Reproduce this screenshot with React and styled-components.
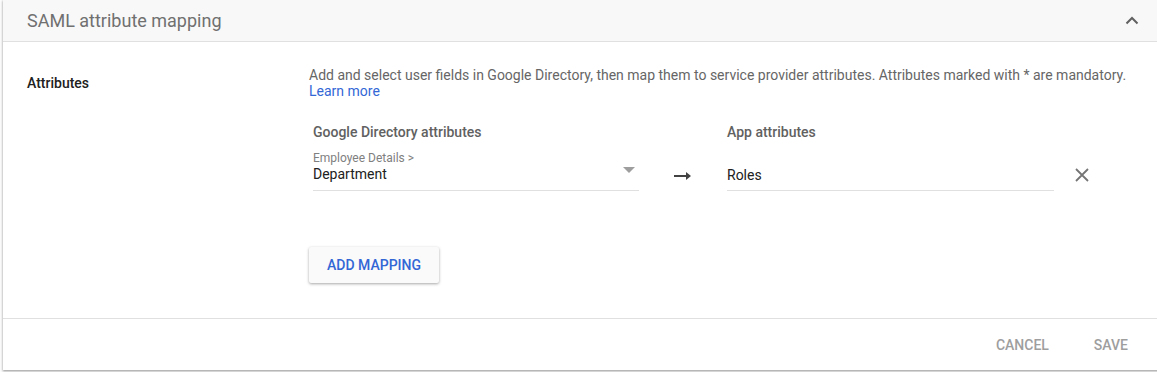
import styled, { createGlobalStyle } from "styled-components";

const GlobalStyle = createGlobalStyle`
  html, body {
    margin: 0;
    padding: 0;
    background: #fff;
    overflow: hidden;
  }
  body {
    font-family: Roboto, "Liberation Sans", Arial, sans-serif;
  }
`;

const Card = styled.section`
  margin: 0 -6px 2px 3px;
  background: #fff;
  box-shadow: 0 1px 2px rgba(0, 0, 0, 0.3), 0 1px 3px 1px rgba(0, 0, 0, 0.12);
  height: 370px;
  display: flex;
  flex-direction: column;
`;

const Header = styled.header`
  height: 41px;
  flex: none;
  display: flex;
  align-items: center;
  justify-content: space-between;
  padding: 0 16px 0 24px;
  background: #f8f8f8;
  border-bottom: 1px solid #e0e0e0;
`;

const Title = styled.h2`
  margin: 0;
  font-size: 18px;
  font-weight: 400;
  color: #707070;
`;

const IconButton = styled.button`
  border: 0;
  background: none;
  padding: 0;
  width: 24px;
  height: 24px;
  display: flex;
  align-items: center;
  justify-content: center;
  margin-right: ${({ $offset }) => $offset || 0}px;
  cursor: pointer;
`;

const Body = styled.div`
  flex: 1;
  display: grid;
  grid-template-columns: 282px 1fr;
  padding: 25px 24px 0 24px;
  border-bottom: 1px solid #e0e0e0;
`;

const SectionLabel = styled.div`
  font-size: 14px;
  font-weight: 500;
  color: #212121;
  padding-top: 8px;
  line-height: 16px;
`;

const Description = styled.p`
  margin: 0;
  font-size: 14px;
  line-height: 16px;
  color: #666;
`;

const Link = styled.a`
  color: #3367d6;
  text-decoration: none;
`;

const Mapping = styled.div`
  margin-top: 25px;
  padding-left: 4px;
  display: grid;
  grid-template-columns: 326px 88px 327px 56px;
  align-items: end;
`;

const ColumnHead = styled.div`
  font-size: 14px;
  font-weight: 500;
  line-height: 16px;
  color: #616161;
  margin-bottom: 10px;
`;

const Field = styled.div`
  position: relative;
  border-bottom: 1px solid #e0e0e0;
  padding-top: ${({ $top }) => $top || 0}px;
  padding-bottom: ${({ $pad }) => $pad}px;
`;

const SmallLabel = styled.div`
  font-size: 12px;
  line-height: 14px;
  color: #808080;
`;

const Value = styled.div`
  font-size: 14px;
  line-height: 19px;
  color: #212121;
`;

const Caret = styled.span`
  position: absolute;
  right: 4px;
  top: 17px;
  width: 0;
  height: 0;
  border-left: 6px solid transparent;
  border-right: 6px solid transparent;
  border-top: 6px solid #9e9e9e;
`;

const ArrowCell = styled.div`
  display: flex;
  justify-content: center;
  padding-bottom: 11px;
`;

const ClearCell = styled.div`
  display: flex;
  justify-content: center;
  padding-bottom: 9px;
`;

const RaisedButton = styled.button`
  margin-top: 56px;
  align-self: flex-start;
  height: 36px;
  padding: 0 18px;
  border: 0;
  border-radius: 2px;
  background: #fafafa;
  color: #3367d6;
  font-family: inherit;
  font-size: 14px;
  font-weight: 500;
  box-shadow: 0 1px 3px rgba(0, 0, 0, 0.35);
  cursor: pointer;
`;

const Footer = styled.footer`
  height: 51px;
  flex: none;
  display: flex;
  align-items: center;
  justify-content: flex-end;
  gap: 13px;
  padding-right: 19px;
`;

const FlatButton = styled.button`
  height: 36px;
  padding: 0 16px;
  border: 0;
  background: none;
  color: #9e9e9e;
  font-family: inherit;
  font-size: 14px;
  font-weight: 500;
  cursor: default;
`;

const Content = styled.div`
  display: flex;
  flex-direction: column;
`;

export default function App() {
  return (
    <>
      <GlobalStyle />
      <Card>
        <Header>
          <Title>SAML attribute mapping</Title>
          <IconButton $offset={3} aria-label="Collapse">
            <svg width="14" height="9" viewBox="0 0 14 9">
              <path d="M1.5 7.5 L7 2 L12.5 7.5" fill="none" stroke="#616161" strokeWidth="2" />
            </svg>
          </IconButton>
        </Header>
        <Body>
          <SectionLabel>Attributes</SectionLabel>
          <Content>
            <Description>
              Add and select user fields in Google Directory, then map them to service provider
              attributes. Attributes marked with * are mandatory.
              <br />
              <Link href="#">Learn more</Link>
            </Description>
            <Mapping>
              <ColumnHead>Google Directory attributes</ColumnHead>
              <span />
              <ColumnHead>App attributes</ColumnHead>
              <span />
              <Field $top={1} $pad={6}>
                <SmallLabel>Employee Details &gt;</SmallLabel>
                <Value>Department</Value>
                <Caret />
              </Field>
              <ArrowCell>
                <svg width="18" height="8" viewBox="0 0 18 8">
                  <path d="M0 4 H13" stroke="#424242" strokeWidth="2" />
                  <path d="M12 0 L17 4 L12 8 Z" fill="#424242" />
                </svg>
              </ArrowCell>
              <Field $pad={5}>
                <Value>Roles</Value>
              </Field>
              <ClearCell>
                <svg width="14" height="14" viewBox="0 0 14 14">
                  <path d="M1 1 L13 13 M13 1 L1 13" stroke="#757575" strokeWidth="1.8" />
                </svg>
              </ClearCell>
            </Mapping>
            <RaisedButton>ADD MAPPING</RaisedButton>
          </Content>
        </Body>
        <Footer>
          <FlatButton>CANCEL</FlatButton>
          <FlatButton>SAVE</FlatButton>
        </Footer>
      </Card>
    </>
  );
}
